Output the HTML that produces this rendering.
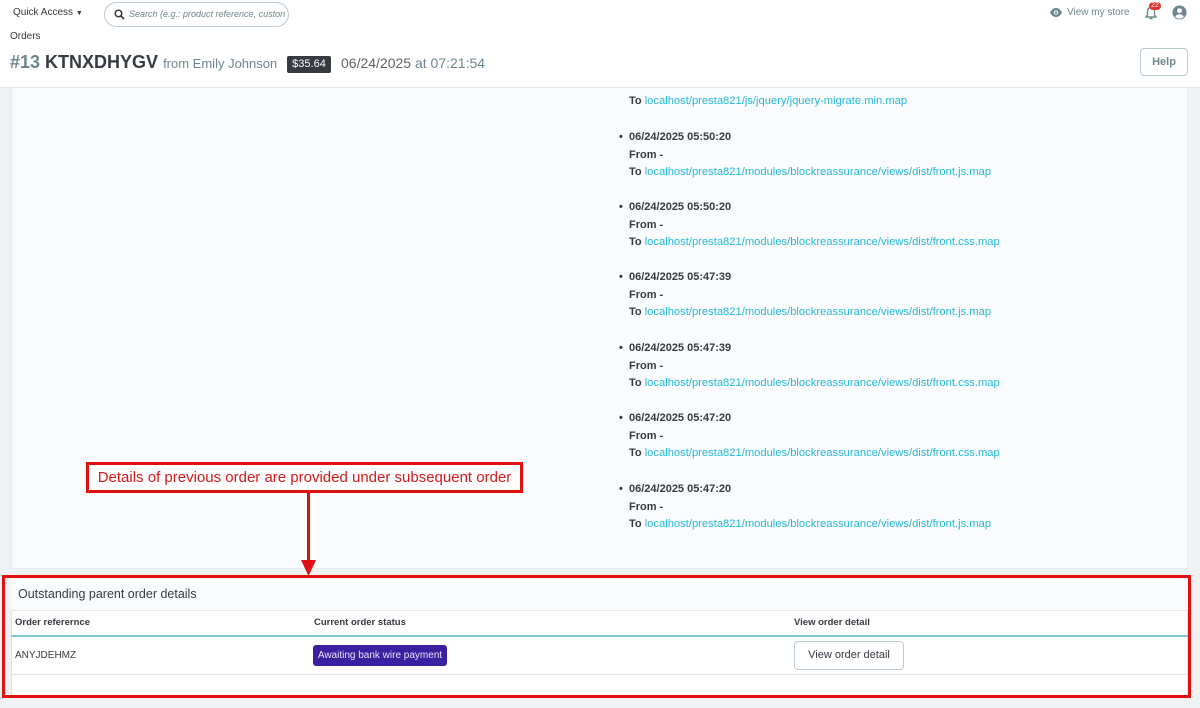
<!DOCTYPE html>
<html><head><meta charset="utf-8"><style>
*{box-sizing:border-box;margin:0;padding:0}
body{width:1200px;height:708px;overflow:hidden;background:#eff1f2;font-family:"Liberation Sans",sans-serif;color:#363a41;position:relative}
.hdr{position:absolute;left:0;top:0;width:1200px;height:88px;background:#fff;border-bottom:1px solid #e4e6e8}
.abs{position:absolute;white-space:nowrap}
.card{position:absolute;left:11px;top:88px;width:1177px;height:481px;background:#fafbfc;border:1px solid #e8eaec;border-top:none}
.e{position:absolute;left:629px;font-size:11px;line-height:17.6px;font-weight:bold;color:#363a41;white-space:nowrap}
.e a{color:#25b9d7;font-weight:normal;text-decoration:none;font-size:11.2px}
.e .b{position:absolute;left:-10px;top:0}
</style></head><body>
<div class="hdr">
<div class="abs" style="left:13px;top:7px;font-size:10px;color:#363a41">Quick Access <span style="font-size:7px">▼</span></div>
<div class="abs" style="left:104px;top:2px;width:185px;height:25px;border:1px solid #bbcdd2;border-radius:13px;background:#fff"></div>
<svg class="abs" style="left:114px;top:9px" width="11" height="11" viewBox="0 0 11 11"><circle cx="4.5" cy="4.5" r="3.3" fill="none" stroke="#363a41" stroke-width="1.5"/><path d="M7 7l3 3" stroke="#363a41" stroke-width="1.7"/></svg>
<div class="abs" style="left:129px;top:9px;font-size:9px;font-style:italic;color:#6c868e">Search (e.g.: product reference, custon</div>
<div class="abs" style="left:10px;top:31px;font-size:10px;color:#363a41">Orders</div>
<div class="abs" style="left:10px;top:52px;font-size:18px;font-weight:bold;color:#363a41"><span style="color:#6c868e">#13</span> KTNXDHYGV <span style="font-size:13px;font-weight:normal;color:#6c868e">from Emily Johnson</span></div>
<div class="abs" style="left:287px;top:56px;width:44px;height:17px;background:#363a41;color:#fff;font-size:11px;line-height:17px;text-align:center;border-radius:2px">$35.64</div>
<div class="abs" style="left:341px;top:55px;font-size:14px;color:#6c868e"><span style="color:#363a41;opacity:.8">06/24/2025</span> at 07:21:54</div>
<svg class="abs" style="left:1049px;top:7px" width="14" height="11" viewBox="0 0 14 11"><path d="M1 5.5C3 2 5 1 7 1s4 1 6 4.5C11 9 9 10 7 10S3 9 1 5.5z" fill="#6c868e"/><circle cx="7" cy="5.5" r="2.2" fill="#fff"/><circle cx="7" cy="5.5" r="1.2" fill="#6c868e"/></svg>
<div class="abs" style="left:1067px;top:7px;font-size:10px;color:#6c868e">View my store</div>
<svg class="abs" style="left:1145px;top:6px" width="12" height="14" viewBox="0 0 12 14"><path d="M6 1.5C3.5 1.5 2.5 3.5 2.5 6v3L1 11h10L9.5 9V6C9.5 3.5 8.5 1.5 6 1.5z" fill="none" stroke="#6c868e" stroke-width="1.4"/><path d="M4.5 12.5h3" stroke="#6c868e" stroke-width="1.4"/></svg>
<div class="abs" style="left:1149px;top:2px;width:12px;height:8px;background:#e3342f;border-radius:4px;color:#fff;font-size:7px;line-height:8px;text-align:center">22</div>
<svg class="abs" style="left:1172px;top:5px" width="15" height="15" viewBox="0 0 16 16"><circle cx="8" cy="8" r="7.5" fill="#6c868e"/><circle cx="8" cy="6" r="2.6" fill="#fff"/><path d="M3.3 12.5c1.2-2 2.8-2.7 4.7-2.7s3.5.7 4.7 2.7C11.4 13.8 9.8 14.5 8 14.5s-3.4-.7-4.7-2z" fill="#fff"/></svg>
<div class="abs" style="left:1140px;top:48px;width:48px;height:28px;border:1px solid #bbcdd2;border-radius:4px;font-size:11px;color:#6c868e;text-align:center;line-height:26px;font-weight:bold">Help</div>
</div>
<div class="card"></div>
<div class="e" style="top:93px">To <a>localhost/presta821/js/jquery/jquery-migrate.min.map</a></div>
<div class="e" style="top:129px"><span class="b">•</span>06/24/2025 05:50:20<br>From -<br>To <a>localhost/presta821/modules/blockreassurance/views/dist/front.js.map</a></div>
<div class="e" style="top:199px"><span class="b">•</span>06/24/2025 05:50:20<br>From -<br>To <a>localhost/presta821/modules/blockreassurance/views/dist/front.css.map</a></div>
<div class="e" style="top:269px"><span class="b">•</span>06/24/2025 05:47:39<br>From -<br>To <a>localhost/presta821/modules/blockreassurance/views/dist/front.js.map</a></div>
<div class="e" style="top:340px"><span class="b">•</span>06/24/2025 05:47:39<br>From -<br>To <a>localhost/presta821/modules/blockreassurance/views/dist/front.css.map</a></div>
<div class="e" style="top:410px"><span class="b">•</span>06/24/2025 05:47:20<br>From -<br>To <a>localhost/presta821/modules/blockreassurance/views/dist/front.css.map</a></div>
<div class="e" style="top:481px"><span class="b">•</span>06/24/2025 05:47:20<br>From -<br>To <a>localhost/presta821/modules/blockreassurance/views/dist/front.js.map</a></div>
<div class="abs" style="left:86px;top:462px;width:437px;height:31px;border:3px solid #e01010;background:#fff;color:#d41a1a;font-size:15px;line-height:25px;text-align:center">Details of previous order are provided under subsequent order</div>
<div class="abs" style="left:307px;top:493px;width:3px;height:72px;background:#e01010"></div>
<svg class="abs" style="left:301px;top:560px" width="15" height="16"><path d="M0 0h15L7.5 16z" fill="#e01010"/></svg>
<div class="abs" style="left:11px;top:579px;width:1177px;height:117px;background:#fff;border:1px solid #dfe3e5"></div>
<div class="abs" style="left:11px;top:579px;width:1177px;height:32px;background:#fafbfc;border-bottom:1px solid #e4e6e8"></div>
<div class="abs" style="left:18px;top:587px;font-size:12.5px;color:#363a41">Outstanding parent order details</div>
<div class="abs" style="left:15px;top:617px;font-size:9.5px;font-weight:bold">Order referernce</div>
<div class="abs" style="left:314px;top:617px;font-size:9.5px;font-weight:bold">Current order status</div>
<div class="abs" style="left:794px;top:617px;font-size:9.5px;font-weight:bold">View order detail</div>
<div class="abs" style="left:11px;top:635px;width:1177px;height:2px;background:#7cc8d6"></div>
<div class="abs" style="left:15px;top:650px;font-size:10px;color:#363a41">ANYJDEHMZ</div>
<div class="abs" style="left:313px;top:645px;width:134px;height:21px;background:#3a1fa0;border-radius:3px;color:#e8e4ff;font-size:10px;line-height:21px;text-align:center">Awaiting bank wire payment</div>
<div class="abs" style="left:794px;top:641px;width:110px;height:29px;border:1px solid #bbcdd2;border-radius:4px;background:#fff;font-size:11px;line-height:27px;text-align:center;color:#363a41">View order detail</div>
<div class="abs" style="left:11px;top:674px;width:1177px;height:1px;background:#dfe3e5"></div>
<div class="abs" style="left:2px;top:575px;width:1189px;height:123px;border:3px solid #e01010"></div>
</body></html>
